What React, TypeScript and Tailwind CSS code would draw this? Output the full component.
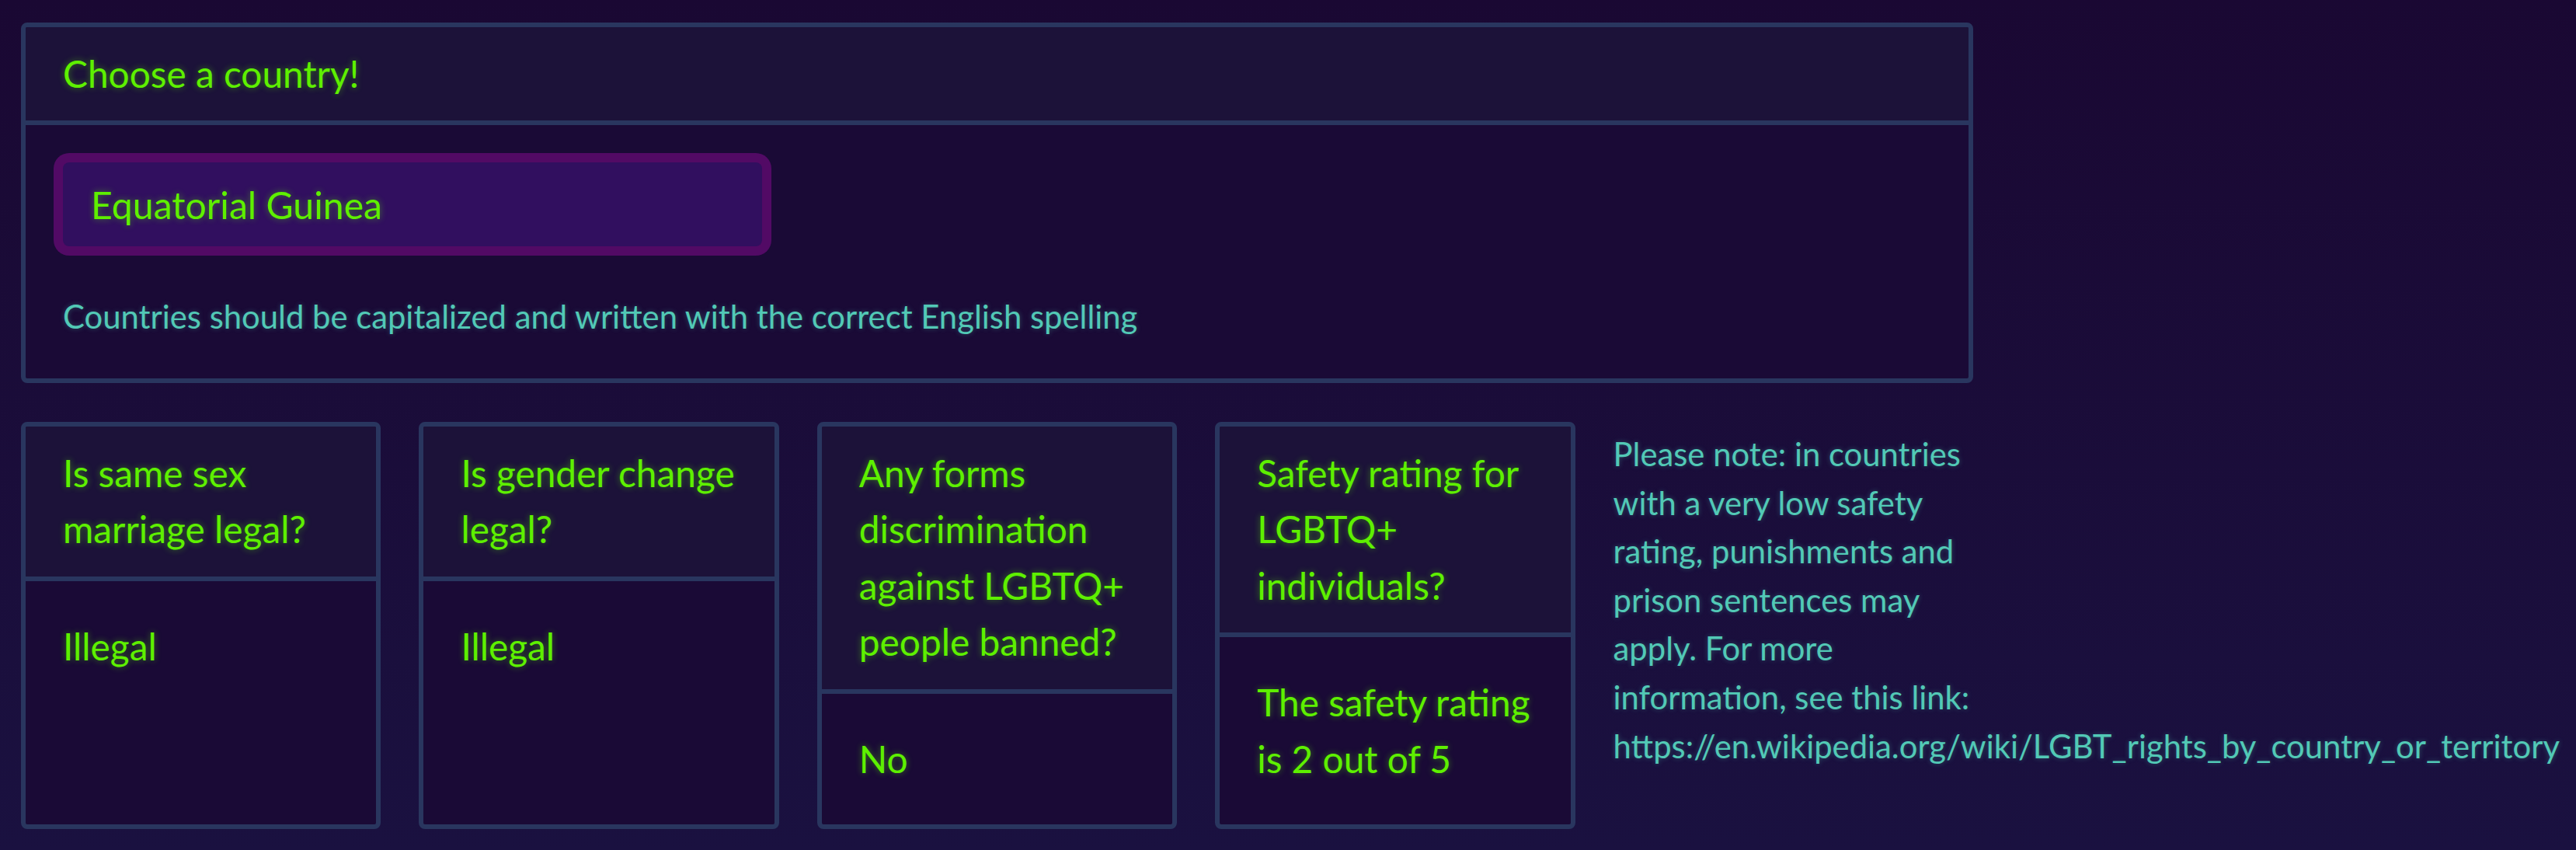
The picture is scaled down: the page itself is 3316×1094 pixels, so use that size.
import React from "react";

const green = "text-[#5ef000] [text-shadow:0_0_8px_rgba(94,240,0,0.45)]";
const teal = "text-[#52c9b6] [text-shadow:0_0_6px_rgba(82,201,182,0.35)]";

type CardProps = { title: string; value: string };

function Card({ title, value }: CardProps) {
  return (
    <div className="flex flex-col overflow-hidden rounded-[8px] border-[6px] border-[#29365f] bg-[#1a0a36]">
      <div className={`border-b-[6px] border-[#29365f] bg-[#1c1239] pl-[48px] pr-[24px] py-[24px] text-[47.8px] leading-[72.4px] ${green}`}>
        {title}
      </div>
      <div className={`flex-1 pl-[48px] pr-[24px] pt-[48px] pb-[48px] text-[47.8px] leading-[72.4px] ${green}`}>
        {value}
      </div>
    </div>
  );
}

export default function App() {
  return (
    <div
      className="min-h-[1094px] w-full bg-gradient-to-b from-[#1a0833] to-[#1a1140] pl-[27px] pt-[29px]"
      style={{ fontFamily: "Lato, 'Open Sans', sans-serif" }}
    >
      <div className="grid w-[2513px] grid-cols-5 gap-x-[49px] gap-y-[50px]">
        <div className="col-span-5 overflow-hidden rounded-[8px] border-[6px] border-[#29365f] bg-[#1a0a36]">
          <div className={`flex h-[126px] items-center border-b-[6px] border-[#29365f] bg-[#1c1239] px-[48px] text-[47.8px] ${green}`}>
            Choose a country!
          </div>
          <div className="h-[326px] px-[36px] pt-[36px]">
            <div className="h-[132px] w-[924px] rounded-[20px] bg-[#520a65] p-[12px]">
              <div className={`flex h-full items-center rounded-[8px] bg-[#310f5f] px-[36px] text-[48.2px] ${green}`}>
                Equatorial Guinea
              </div>
            </div>
            <p className={`ml-[12px] mt-[47px] text-[41.8px] leading-[62.6px] ${teal}`}>
              Countries should be capitalized and written with the correct English spelling
            </p>
          </div>
        </div>

        <Card title="Is same sex marriage legal?" value="Illegal" />
        <Card title="Is gender change legal?" value="Illegal" />
        <Card title="Any forms discrimination against LGBTQ+ people banned?" value="No" />
        <Card title="Safety rating for LGBTQ+ individuals?" value="The safety rating is 2 out of 5" />

        <p className={`mt-[10px] text-[41.8px] leading-[62.6px] ${teal}`}>
          Please note: in countries with a very low safety rating, punishments and prison sentences may apply. For more information, see this link:{" "}
          https://en.wikipedia.org/wiki/LGBT_rights_by_country_or_territory
        </p>
      </div>
    </div>
  );
}
